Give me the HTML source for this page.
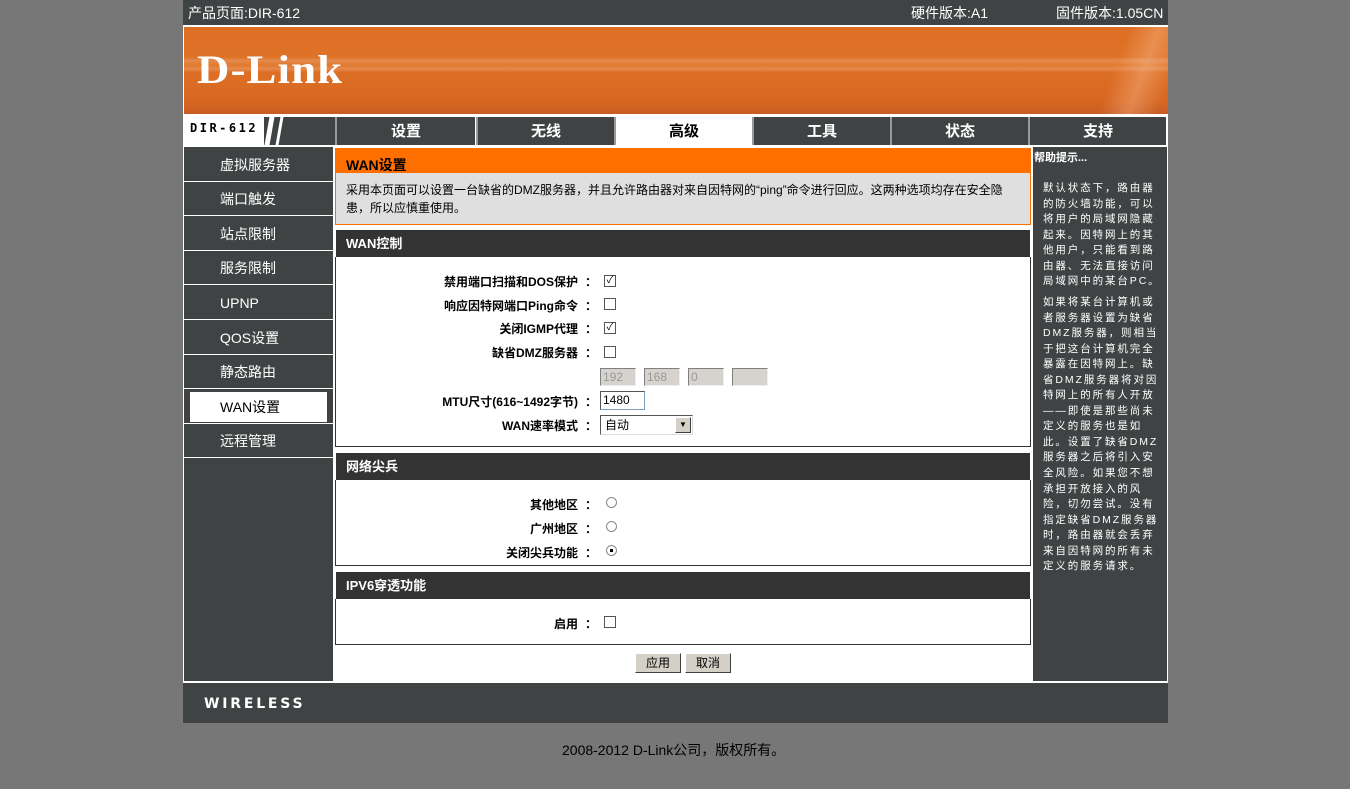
<!DOCTYPE html>
<html><head><meta charset="utf-8"><style>
*{margin:0;padding:0;box-sizing:border-box}
body{width:1350px;height:789px;background:#777;font-family:"Liberation Sans","Noto Sans CJK SC",sans-serif;position:relative;overflow:hidden}
.a{position:absolute}
.t{color:#fff;font-size:14px}
.nav{position:absolute;left:184px;width:149px;color:#fff;font-size:14px;padding-left:36px;height:34px;line-height:34px;border-bottom:1px solid #fff}
.tab{position:absolute;top:117px;height:28px;background:#404344;color:#fff;font-weight:bold;font-size:15px;text-align:center;line-height:30px;border-left:2px solid #9a9a9a}
.lbl{position:absolute;right:772px;font-size:12px;font-weight:bold;color:#000;text-align:right;white-space:nowrap}
.col{position:absolute;left:585px;font-size:12px;font-weight:bold}
.cb{position:absolute;left:604px;width:12px;height:12px;border:1px solid #555;background:#fff;font-size:10px;line-height:10px;text-align:center}
.rd{position:absolute;left:606px;width:11px;height:11px;border:1px solid #888;border-radius:50%;background:#fff}
.sh{position:absolute;left:336px;width:694px;height:27px;background:#333;color:#fff;font-weight:bold;font-size:13px;line-height:28px;padding-left:10px}
.sb{position:absolute;left:335px;width:696px;background:#fff;border:1px solid #333;border-top:none}
.ip{position:absolute;top:368px;height:18px;width:36px;background:#d6d3ce;border:1px solid #808080;border-right-color:#eee;border-bottom-color:#eee;font-size:12px;color:#999;padding-left:2px;line-height:16px}
.btn{position:absolute;top:653px;height:20px;background:#d4d0c8;border:1px solid #fff;border-right-color:#404040;border-bottom-color:#404040;font-size:12px;text-align:center;line-height:18px}
.help{position:absolute;left:1043px;color:#fff;font-size:10.5px;line-height:15.55px;letter-spacing:1.9px;white-space:nowrap}
</style></head><body>
<div class="a" style="left:183px;top:0;width:985px;height:723px;background:#fff"></div>
<div class="a" style="left:183px;top:0;width:985px;height:25px;background:#404344"></div>
<div class="a t" style="left:188px;top:3px">产品页面:DIR-612</div>
<div class="a t" style="left:911px;top:3px">硬件版本:A1</div>
<div class="a t" style="left:1056px;top:3px">固件版本:1.05CN</div>
<div class="a" style="left:184px;top:27px;width:984px;height:87px;background:linear-gradient(180deg,#dd6f25 0%,#de7226 35%,#e58a4f 38%,#e07a2e 44%,#e58a4f 48%,#dd6f25 52%,#d76722 85%,#c85c22 100%)"></div>
<div class="a" style="left:1100px;top:27px;width:68px;height:87px;background:linear-gradient(110deg,transparent 30%,rgba(255,200,160,.35) 60%,transparent 90%)"></div>
<div class="a" style="left:197px;top:46px;color:#fff;font-family:'Liberation Serif',serif;font-weight:bold;font-size:40px;letter-spacing:1px;transform:scaleX(1.12);transform-origin:left">D-Link</div>
<div class="a" style="left:190px;top:121px;font-family:'DejaVu Sans Mono',monospace;font-weight:bold;font-size:12px;letter-spacing:2.5px">DIR-612</div>
<div class="a" style="left:264px;top:117px;width:71px;height:28px;background:#404344"></div>
<div class="a" style="left:267px;top:117px;width:5px;height:28px;background:#fff;transform:skewX(-10deg)"></div>
<div class="a" style="left:278px;top:117px;width:3px;height:28px;background:#fff;transform:skewX(-10deg)"></div>
<div class="tab" style="left:335px;width:140px">设置</div>
<div class="tab" style="left:476px;width:138px">无线</div>
<div class="tab" style="left:614px;width:138px;background:#fff;color:#000">高级</div>
<div class="tab" style="left:752px;width:138px">工具</div>
<div class="tab" style="left:890px;width:138px">状态</div>
<div class="tab" style="left:1028px;width:138px">支持</div>
<div class="a" style="left:184px;top:147px;width:149px;height:534px;background:#404344"></div>
<div class="nav" style="top:148px">虚拟服务器</div>
<div class="nav" style="top:182px">端口触发</div>
<div class="nav" style="top:217px">站点限制</div>
<div class="nav" style="top:251px">服务限制</div>
<div class="nav" style="top:286px">UPNP</div>
<div class="nav" style="top:321px">QOS设置</div>
<div class="nav" style="top:355px">静态路由</div>
<div class="nav" style="top:390px"></div>
<div class="a" style="left:190px;top:392px;width:137px;height:30px;background:#fff;color:#000;font-size:14px;line-height:30px;padding-left:30px">WAN设置</div>
<div class="nav" style="top:424px">远程管理</div>
<div class="a" style="left:1033px;top:147px;width:134px;height:534px;background:#404344"></div>
<div class="a" style="left:1034px;top:149px;color:#fff;font-size:11px;font-weight:bold">帮助提示...</div>
<div class="help" style="top:181px">默认状态下，路由器<br>的防火墙功能，可以<br>将用户的局域网隐藏<br>起来。因特网上的其<br>他用户，只能看到路<br>由器、无法直接访问<br>局域网中的某台PC。</div>
<div class="help" style="top:295px">如果将某台计算机或<br>者服务器设置为缺省<br>DMZ服务器，则相当<br>于把这台计算机完全<br>暴露在因特网上。缺<br>省DMZ服务器将对因<br>特网上的所有人开放<br>——即使是那些尚未<br>定义的服务也是如<br>此。设置了缺省DMZ<br>服务器之后将引入安<br>全风险。如果您不想<br>承担开放接入的风<br>险，切勿尝试。没有<br>指定缺省DMZ服务器<br>时，路由器就会丢弃<br>来自因特网的所有未<br>定义的服务请求。</div>
<div class="a" style="left:335px;top:148px;width:696px;height:77px;background:#dfdfdf;border:1px solid #ff6f00"></div>
<div class="a" style="left:336px;top:149px;width:694px;height:24px;background:#ff6f00;font-weight:bold;font-size:14px;padding:6px 0 0 10px">WAN设置</div>
<div class="a" style="left:346px;top:181px;width:670px;font-size:12px;line-height:18px">采用本页面可以设置一台缺省的DMZ服务器，并且允许路由器对来自因特网的“ping”命令进行回应。这两种选项均存在安全隐患，所以应慎重使用。</div>
<div class="sh" style="top:230px">WAN控制</div>
<div class="sb" style="top:257px;height:190px"></div>
<div class="lbl" style="top:273px">禁用端口扫描和DOS保护</div><div class="col" style="top:273px">：</div><div class="cb" style="top:275px">✓</div>
<div class="lbl" style="top:297px">响应因特网端口Ping命令</div><div class="col" style="top:297px">：</div><div class="cb" style="top:298px"></div>
<div class="lbl" style="top:320px">关闭IGMP代理</div><div class="col" style="top:320px">：</div><div class="cb" style="top:322px">✓</div>
<div class="lbl" style="top:344px">缺省DMZ服务器</div><div class="col" style="top:344px">：</div><div class="cb" style="top:346px"></div>
<div class="ip" style="left:600px">192</div><div class="ip" style="left:644px">168</div><div class="ip" style="left:688px">0</div><div class="ip" style="left:732px"></div>
<div class="lbl" style="top:393px">MTU尺寸(616~1492字节)</div><div class="col" style="top:393px">：</div>
<div class="a" style="left:600px;top:391px;width:45px;height:19px;border:1px solid #7f9db9;border-top-color:#555;border-left-color:#555;font-size:12px;line-height:17px;padding-left:2px">1480</div>
<div class="lbl" style="top:417px">WAN速率模式</div><div class="col" style="top:417px">：</div>
<div class="a" style="left:600px;top:415px;width:93px;height:20px;border:1px solid #555;border-right-color:#ddd;border-bottom-color:#ddd;font-size:12px;line-height:18px;padding-left:4px">自动</div>
<div class="a" style="left:675px;top:417px;width:16px;height:16px;background:#d4d0c8;border:1px solid #fff;border-right-color:#404040;border-bottom-color:#404040;font-size:8px;text-align:center;line-height:14px">▼</div>
<div class="sh" style="top:453px">网络尖兵</div>
<div class="sb" style="top:480px;height:86px"></div>
<div class="lbl" style="top:496px">其他地区</div><div class="col" style="top:496px">：</div><div class="rd" style="top:497px"></div>
<div class="lbl" style="top:520px">广州地区</div><div class="col" style="top:520px">：</div><div class="rd" style="top:521px"></div>
<div class="lbl" style="top:544px">关闭尖兵功能</div><div class="col" style="top:544px">：</div><div class="rd" style="top:545px"><div style="width:3px;height:3px;background:#000;margin:3px"></div></div>
<div class="sh" style="top:572px">IPV6穿透功能</div>
<div class="sb" style="top:599px;height:46px"></div>
<div class="lbl" style="top:615px">启用</div><div class="col" style="top:615px">：</div><div class="cb" style="top:616px"></div>
<div class="btn" style="left:635px;width:46px">应用</div>
<div class="btn" style="left:685px;width:46px">取消</div>
<div class="a" style="left:183px;top:683px;width:985px;height:40px;background:#404344"></div>
<div class="a" style="left:204px;top:696px;color:#fff;font-weight:900;font-size:14px;letter-spacing:2.8px;font-family:'DejaVu Sans',sans-serif">WIRELESS</div>
<div class="a" style="left:562px;top:740px;font-size:14px;color:#000">2008-2012 D-Link公司，版权所有。</div>
</body></html>
